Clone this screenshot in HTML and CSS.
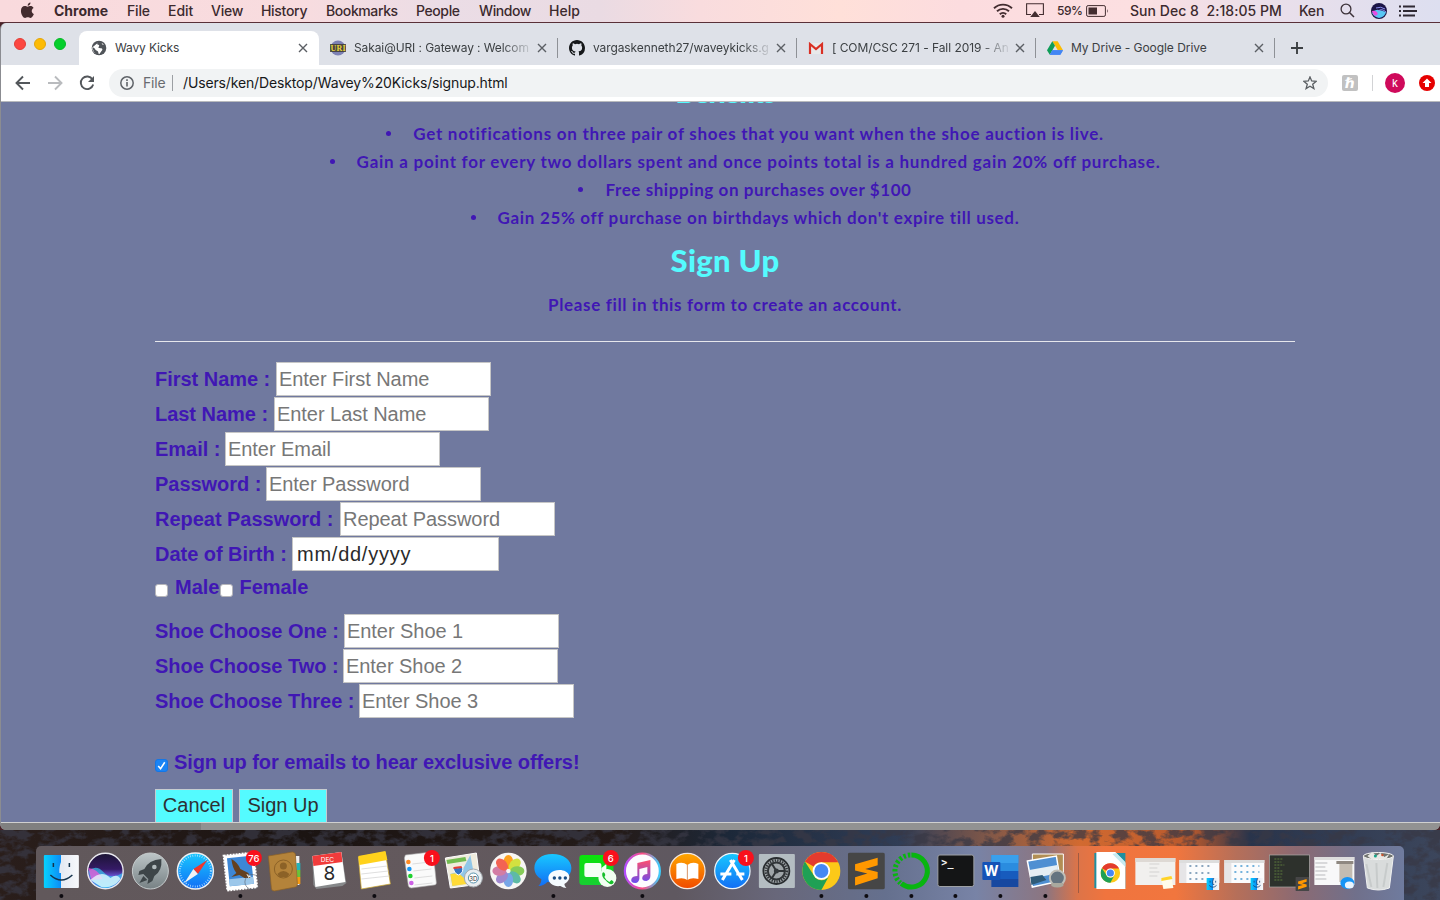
FILE: index.html
```html
<!DOCTYPE html>
<html lang="en">
<head>
<meta charset="utf-8">
<title>Wavy Kicks</title>
<link rel="stylesheet" href="styles.css">
</head>
<body>
<svg class="defs" width="0" height="0" aria-hidden="true">
  <defs>
    <linearGradient id="blue" x2="0" y2="1"><stop stop-color="#18c8ff"/><stop offset="1" stop-color="#126ef5"/></linearGradient>
    <linearGradient id="grey" x2="0" y2="1"><stop stop-color="#bdc6c8"/><stop offset="1" stop-color="#778184"/></linearGradient>
    <linearGradient id="orange" x2="0" y2="1"><stop stop-color="#ffa800"/><stop offset="1" stop-color="#f04a00"/></linearGradient>
    <linearGradient id="green" x2="0" y2="1"><stop stop-color="#0be30b"/><stop offset="1" stop-color="#17cf32"/></linearGradient>
    <linearGradient id="pink" x2="0" y2="1"><stop stop-color="#ff4d6d"/><stop offset="1" stop-color="#6a4df0"/></linearGradient>
    <linearGradient id="ring"><stop stop-color="#b04dff"/><stop offset=".5" stop-color="#ff4d82"/><stop offset="1" stop-color="#3ccfff"/></linearGradient>
    <linearGradient id="siri" x2="0" y2="1"><stop stop-color="#1b1433"/><stop offset=".45" stop-color="#351a66"/><stop offset=".65" stop-color="#6a55d8"/><stop offset="1" stop-color="#2fa6f2"/></linearGradient>
    <linearGradient id="finder"><stop stop-color="#07d2ff"/><stop offset=".5" stop-color="#0c8bf5"/><stop offset=".5" stop-color="#e5eaf3"/><stop offset="1" stop-color="#f7f8fb"/></linearGradient>
    <symbol id="chrome" viewBox="-20 -20 40 40">
      <circle r="19.5" fill="#fcc918"/>
      <path d="M-16.9-9.7A19.5 19.5 0 0 1 16.9-9.8L17-9H0A9 9 0 0 0-8-4.500z" fill="#e33b2e"/>
      <path d="M-16.9-9.7A19.5 19.5 0 0 0 0 19.5L8 4.800A9 9 0 0 1-8 4.200z" fill="#1fa055"/>
      <circle r="9" fill="#fff"/><circle r="7.200" fill="#4688f4"/>
    </symbol>
    <symbol id="minifinder" viewBox="0 0 14 13"><path d="M0 0h14v13H0z" fill="url(#finder)"/><path d="M3 8q4 4 8 0M4 3v2M10 3v2M8 0q-2 4-1 7h1.500" fill="none" stroke="#174a7c" stroke-width=".9"/></symbol>
    <symbol id="sublime" viewBox="-18 -18 36 36"><rect x="-18" y="-18" width="36" height="36" rx="2" fill="#464646"/><path d="M-11-6.500 11-13V-5.500L-1-2 11 1V7L-11 14V6L1 2.500-11-.5z" fill="#ff9800"/></symbol>
    <symbol id="close" viewBox="0 0 10 10"><path d="m1 1 8 8M9 1 1 9" stroke="#5b5f64" stroke-width="1.400"/></symbol>
  </defs>
</svg>

<div class="screen">
  <header class="menubar">
    <svg class="apple" viewBox="0 0 16 18"><path d="M11.200.5C9.500.6 8 2.200 8.200 4 9.900 4 11.300 2.300 11.200.5M8.100 5C7.300 5 6.300 4.300 5.100 4.300 2.900 4.300 1 6.200 1 9.500 1 13 3.500 17 5.400 17c1 0 1.600-.7 2.900-.7s1.700.7 2.900.7c1.600 0 3-2.600 3.600-4.200-2.900-1.200-3-5-.3-6.500C13.600 4.900 12.500 4.300 11.300 4.300 9.900 4.300 9 5 8.100 5z"/></svg>
    <nav class="menus">
      <b class="m-app">Chrome</b><span class="m-file">File</span><span class="m-edit">Edit</span><span class="m-view">View</span><span class="m-hist">History</span><span class="m-book">Bookmarks</span><span class="m-ppl">People</span><span class="m-win">Window</span><span>Help</span>
    </nav>
    <div class="status">
      <svg class="wifi" viewBox="0 0 20 15"><g fill="none" stroke="#432d30" stroke-width="1.900"><path d="M1 5.200a13 13 0 0 1 18 0M4 8.300a8.700 8.700 0 0 1 12 0M6.800 11.200a4.600 4.600 0 0 1 6.400 0"/></g><circle cx="10" cy="13.300" r="1.500" fill="#432d30"/></svg>
      <svg class="airplay" viewBox="0 0 18 15"><path d="M5 11.500H.6V.8h16.800v10.700H13" fill="none" stroke="#432d30" stroke-width="1.100"/><path d="m9 8 4.800 6H4.200z" fill="#432d30"/></svg>
      <span class="pct">59%</span>
      <svg class="battery" viewBox="0 0 23 12"><rect x=".6" y=".6" width="18.800" height="10.800" rx="1.500" fill="none" stroke="#432d30"/><path d="M2.500 2.500h8.500v7H2.500zM21 4q1.500 2 0 4z" fill="#432d30"/></svg>
      <span class="clock">Sun Dec 8&nbsp; 2:18:05 PM</span>
      <span class="user">Ken</span>
      <svg class="search" viewBox="0 0 15 15"><circle cx="6" cy="6" r="4.900" fill="none" stroke="#3c3239" stroke-width="1.300"/><path d="m9.500 9.500 4.500 4.500" stroke="#3c3239" stroke-width="1.500"/></svg>
      <svg class="siri" viewBox="0 0 16 16"><circle cx="8" cy="8" r="8" fill="#1b1547"/><path d="M1 10q3-4 7-3t7 2q-1 5-7 6-5-1-7-5" fill="#58c7f4"/><path d="M.8 8q5-1 6 3-2 3-4 1z" fill="#e64de1"/><path d="M7 8q4-3 8 1M5 5q5-2 9 1" fill="none" stroke="#8b8ff0"/></svg>
      <svg class="list" viewBox="0 0 18 12"><path d="M0 1.500h2M4 1.500h12M0 6h2M4 6h14M0 10.500h2M4 10.500h12" stroke="#2e2933" stroke-width="1.900"/></svg>
    </div>
  </header>

  <main class="window">
    <div class="tabstrip">
      <div class="lights"><i class="red"></i><i class="yellow"></i><i class="green"></i></div>
      <div class="tab active">
        <svg class="fav" viewBox="0 0 16 16"><circle cx="8" cy="8" r="7.300" fill="#505459"/><path d="M8.500 1.500c-1 1-3 1.200-2.500 2.500.8 1.200 2 .3 2.200 1.500S7 7 7.500 7.800s3.200 0 3.800 1.200c.5 1-.8 1.800-1.500 3L8.500 14c-1.500 0-1-1.500-1.500-2.500S4.500 10.500 4 9 2 7.500 1.800 7.500 2 12 5 13.500c-2.500-1-4-3.500-3.800-6M11 3c-.8.800.5 2 2 2" fill="#fff"/></svg>
        <span class="title t1">Wavy Kicks</span><svg class="x"><use href="#close"/></svg>
      </div>
      <div class="tab">
        <svg class="fav" viewBox="0 0 16 16"><circle cx="8" cy="8" r="7.500" fill="#7d81b4"/><path d="M0 4h16v8H0z" fill="#393525" opacity=".8"/><text x="8" y="11.400" text-anchor="middle" class="uri" textLength="15">URI</text></svg>
        <span class="title fade t2">Sakai@URI : Gateway : Welcom</span><svg class="x"><use href="#close"/></svg>
      </div>
      <div class="tab">
        <svg class="fav" viewBox="0 0 16 16"><path fill="#16181a" d="M8 0C3.580 0 0 3.580 0 8c0 3.540 2.290 6.530 5.470 7.590.4.070.55-.17.55-.38v-1.490c-2.010.37-2.530-.49-2.690-.94-.09-.23-.48-.94-.82-1.130-.28-.15-.68-.52-.01-.53.63-.01 1.080.58 1.230.82.72 1.210 1.870.87 2.330.66.07-.52.28-.87.51-1.070-1.780-.2-3.640-.89-3.640-3.950 0-.87.31-1.590.82-2.150-.08-.2-.36-1.020.08-2.120 0 0 .67-.21 2.200.82a7.600 7.600 0 0 1 4 0c1.530-1.040 2.200-.82 2.200-.82.44 1.100.16 1.920.08 2.120.51.56.82 1.270.82 2.150 0 3.070-1.870 3.750-3.650 3.950.29.25.54.73.54 1.480v2.200c0 .21.15.46.55.38A8 8 0 0 0 16 8c0-4.420-3.580-8-8-8z"/></svg>
        <span class="title fade t3">vargaskenneth27/waveykicks.g</span><svg class="x"><use href="#close"/></svg>
      </div>
      <div class="tab">
        <svg class="fav" viewBox="0 0 16 16"><path d="M2 3h12v11H2z" fill="#e8e9ea"/><path d="M2 14V4L8 9l6-5v10" fill="none" stroke="#d93025" stroke-width="2.200"/></svg>
        <span class="title fade t4">[ COM/CSC 271 - Fall 2019 - An</span><svg class="x"><use href="#close"/></svg>
      </div>
      <div class="tab">
        <svg class="fav" viewBox="0 0 16 16"><path d="M5.300 1.200h5.400L16 10.300h-5.200z" fill="#fbbc05"/><path d="M5.300 1.200 8 5.800 2.800 14.800 0 10.300z" fill="#0f9d58"/><path d="m5.400 10.300H16l-2.700 4.500H2.800z" fill="#4285f4"/><path d="M5.400 10.300H16l-2.700 4.500H2.800z" fill="#4285f4"/></svg>
        <span class="title t5">My Drive - Google Drive</span><svg class="x"><use href="#close"/></svg>
      </div>
      <svg class="plus" viewBox="0 0 12 12"><path d="M6 0v12M0 6h12" stroke="#3c4043" stroke-width="1.900"/></svg>
    </div>

    <div class="toolbar">
      <svg class="nav" viewBox="0 0 16 16"><path d="M15 8H2M8 1.500 1.500 8 8 14.500" fill="none" stroke="#53575b" stroke-width="1.900"/></svg>
      <svg class="nav" viewBox="0 0 16 16"><path d="M1 8h13M8 1.500 14.500 8 8 14.500" fill="none" stroke="#b9bbbe" stroke-width="1.900"/></svg>
      <svg class="nav" viewBox="0 0 16 16"><path d="M13.500 4.500A6.300 6.300 0 1 0 14.200 9.500" fill="none" stroke="#53575b" stroke-width="1.900"/><path d="M15 1v6H9z" fill="#53575b"/></svg>
      <div class="omnibox">
        <svg class="info" viewBox="0 0 14 14"><circle cx="7" cy="7" r="6.200" fill="none" stroke="#5f6368" stroke-width="1.500"/><path d="M7 6v4.500M7 3.300v1.600" stroke="#5f6368" stroke-width="1.600"/></svg>
        <span class="scheme">File</span><span class="url">/Users/ken/Desktop/Wavey%20Kicks/signup.html</span>
        <svg class="star" viewBox="0 0 14 14"><path d="m7 .9 1.700 4.100 4.500.3-3.500 2.900 1.200 4.400L7 10.200l-3.900 2.400 1.200-4.400L.8 5.300l4.500-.3z" fill="none" stroke="#5b5f63" stroke-width="1.300"/></svg>
      </div>
      <span class="honey">ℏ</span><i class="vsep"></i><span class="avatar">k</span>
      <svg class="update" viewBox="0 0 16 16"><circle cx="8" cy="8" r="8" fill="#e60000"/><path d="M8 3.500 12.500 8H10v4H6V8H3.500z" fill="#fff"/></svg>
    </div>

    <section class="page">
      <div class="container">
        <h2 class="benefits">Benefits</h2>
        <ul class="perks">
          <li class="l1">Get notifications on three pair of shoes that you want when the shoe auction is live.</li>
          <li class="l2">Gain a point for every two dollars spent and once points total is a hundred gain 20% off purchase.</li>
          <li class="l3">Free shipping on purchases over $100</li>
          <li class="l4">Gain 25% off purchase on birthdays which don't expire till used.</li>
        </ul>
        <h2 class="signup">Sign Up</h2>
        <p class="intro">Please fill in this form to create an account.</p>
        <hr>
        <form>
          <div class="row"><label class="w1">First Name :</label><input type="text" placeholder="Enter First Name"></div>
          <div class="row"><label class="w2">Last Name :</label><input type="text" placeholder="Enter Last Name"></div>
          <div class="row"><label class="w3">Email :</label><input type="text" placeholder="Enter Email"></div>
          <div class="row"><label class="w4">Password :</label><input type="password" placeholder="Enter Password"></div>
          <div class="row"><label class="w5">Repeat Password :</label><input type="password" placeholder="Repeat Password"></div>
          <div class="row"><label class="w6">Date of Birth :</label><input class="date" type="text" value="mm/dd/yyyy"></div>
          <div class="checks gender"><i class="box"></i><label class="male">Male</label><i class="box"></i><label>Female</label></div>
          <div class="row"><label class="w7">Shoe Choose One :</label><input type="text" placeholder="Enter Shoe 1"></div>
          <div class="row"><label class="w8">Shoe Choose Two :</label><input type="text" placeholder="Enter Shoe 2"></div>
          <div class="row"><label class="w9">Shoe Choose Three :</label><input type="text" placeholder="Enter Shoe 3"></div>
          <div class="checks offers"><i class="box on"><svg viewBox="0 0 14 14"><path d="m3.500 7.500 2.500 3 4.500-7" fill="none" stroke="#fff" stroke-width="1.700"/></svg></i><label>Sign up for emails to hear exclusive offers!</label></div>
          <div class="buttons"><button type="button" class="cancel">Cancel</button><button type="button" class="submit">Sign Up</button></div>
        </form>
      </div>
    </section>
    <div class="shelf"></div>
  </main>

  <footer class="desktop">
    <svg class="rocks" width="1440" height="71" preserveAspectRatio="none">
      <filter id="rough" x="0" y="0" width="100%" height="100%"><feTurbulence type="fractalNoise" baseFrequency=".07 .11" numOctaves="4" seed="8"/><feColorMatrix values="0 0 0 0 .04  0 0 0 0 .04  0 0 0 0 .06  4.500 0 0 0 -1.900"/></filter>
      <rect width="1440" height="71" filter="url(#rough)"/>
    </svg>
    <div class="dock">
      <div class="apps">
        <svg viewBox="-22 -25 44 54"><rect x="-17.500" y="-16" width="35" height="33" rx="1" fill="url(#finder)"/><path d="M2.500-16Q-3-5-2 2H2.500" fill="#e5eaf3"/><path d="M-11 4Q0 14 11 4M-8-8v4M8-8v4" fill="none" stroke="#15334c" stroke-width="1.500"/><circle class="dot" cy="25" r="2"/></svg>
        <svg viewBox="-22 -25 44 54"><circle r="17.800" fill="url(#siri)" stroke="#e8e8ee" stroke-width="1.400"/><path d="M-17 0Q-9-7-2 1T17 2Q16 13 0 17-15 13-17 0" fill="#39c5ef" opacity=".7"/><path d="M-17-3Q-7-2-3 8L-14 9" fill="#ef58d5" opacity=".75"/><path d="M-15 9Q-4-2 5 7 12 2 15 8 8 18-4 16z" fill="#e9ffff" opacity=".75"/></svg>
        <svg viewBox="-22 -25 44 54"><circle r="18" fill="url(#grey)" stroke="#c5cbcc"/><path d="M11-12Q-2-11-6-2L-11 0-12 4-7 3-2 8-3 13 2 10 4 5Q12 0 11-12M-7 5-11 12-3 9" fill="#3d4548"/><circle cx="4" cy="-4" r="2.300" fill="#b1babc"/></svg>
        <svg viewBox="-22 -25 44 54"><circle r="18" fill="url(#blue)" stroke="#eef1f4" stroke-width="1.500"/><circle r="15.500" fill="none" stroke="#bfe8ff" stroke-dasharray=".7 1.700" stroke-width="2"/><path d="M12-11 2.500 3-2-2z" fill="#f0362c"/><path d="M-11 12 2.500 3-2-2z" fill="#f1f3f5"/></svg>
        <svg viewBox="-22 -25 44 54"><g transform="rotate(-6)"><rect x="-15" y="-17" width="30" height="35" fill="#fff" stroke="#fff" stroke-width="2" stroke-dasharray="2 1"/><path d="M-12-14h24v28h-24z" fill="#3d87d6"/><path d="M-12 7h24v7h-24z" fill="#9cc7ea"/></g><path d="M-9-12Q-3-9 0-2L8 2 10 7 4 7-1 4-9 6-4 2Q-8-3-9-12" fill="#64401f"/><path d="m6 3 5 2-3 2z" fill="#f4ede0"/><circle cx="12" cy="11" r="7.500" fill="none" stroke="#56616e" opacity=".6"/><circle cx="13.500" cy="-13" r="8" fill="#f9101c"/><text x="13.500" y="-9.300" class="badge">76</text><circle class="dot" cy="25" r="2"/></svg>
        <svg viewBox="-22 -25 44 54"><path d="M11-15h4v29h-4z" fill="#eee"/><path d="M12-8h4v7h-4z" fill="#24b3bb"/><path d="M12-1h4v7h-4z" fill="#6ac239"/><path d="M12 6h4v7h-4z" fill="#f59b14"/><path d="m-16-15 24-4q2 0 3 2l2 30q0 3-2 3l-21 4q-3 0-3-3z" fill="#b4833a" stroke="#8c6227" stroke-width=".7"/><circle cx="-1" cy="-2" r="9" fill="none" stroke="#8c6227"/><circle cx="-1" cy="-5" r="3.500" fill="#8c6227"/><path d="M-7 3Q-1-3 5 3L3 6H-5z" fill="#8c6227"/></svg>
        <svg viewBox="-22 -25 44 54"><path d="m-17-15 29-4 5 31-4 3-26 3-3-4z" fill="#87898b"/><path d="m-17-15 29-4 4 30-30 5z" fill="#fff"/><path d="m-17-15 29-4 1 10-29 4z" fill="#f13b3b"/><text x="-2" y="-9.500" class="cal-m">DEC</text><text x="0" y="9" class="cal-d">8</text></svg>
        <svg viewBox="-22 -25 44 54"><path d="m-16-14 27-5 5 32-29 5z" fill="#fff" stroke="#cfa92e" stroke-width=".7"/><path d="m-16-15 27-5 2 9-28 5z" fill="#ffd21c"/><path d="m-13-2 26-3m-26 8 27-3m-27 8 28-3" stroke="#d7d7d7" stroke-width=".8"/><circle class="dot" cy="25" r="2"/></svg>
        <svg viewBox="-22 -25 44 54"><path d="m-13-16 26-3q2 0 2 2l3 29q0 2-2 2l-23 3q-2 0-3-2l-4-28z" fill="#fafafa" stroke="#aaa" stroke-width=".6"/><path d="m-6-7 18-2M-5 0l18-2M-4 7l18-2M-4 14l18-2" stroke="#d5d5d5" stroke-width=".8"/><circle cx="-10" cy="-9" r="2.300" fill="#ff8a22"/><circle cx="-9" cy="-2" r="2.300" fill="#1697f4"/><circle cx="-8" cy="5" r="2.300" fill="#1fd02f"/><circle cx="-7" cy="12" r="2.300" fill="#cd61e5"/><circle cx="13.500" cy="-13" r="8" fill="#f9101c"/><text x="13.500" y="-9.300" class="badge">1</text></svg>
        <svg viewBox="-22 -25 44 54"><path d="m-18-13 31-5 4 31-30 4z" fill="#f0ecdd" stroke="#fff"/><path d="m-17-11 19-3 1 4-19 3z" fill="#72bc51"/><path d="m-13 3 12-4 8-15 5 27-23 4z" fill="#91c7e8"/><path d="m-13 3 8-1 9 8-1 3-14 2z" fill="#ffda37"/><path d="M-10-4q5 2 9-1 2 7-4 9-5-2-5-8" fill="#3474c4" stroke="#fff"/><path d="m-10-4 8-1 1 2-9 1z" fill="#e43d35"/><circle cx="10" cy="7" r="9" fill="#e9edf0" stroke="#a3abb0"/><circle cx="10" cy="7" r="5" fill="#fff" stroke="#5893ac"/><text x="10" y="9.500" class="map3d">3D</text></svg>
        <svg viewBox="-22 -25 44 54"><circle r="18.300" fill="#f7f6f4"/><g opacity=".88"><ellipse cy="-9" rx="4.800" ry="7" fill="#ff9500"/><ellipse cy="-9" rx="4.800" ry="7" fill="#cfdf28" transform="rotate(45)"/><ellipse cy="-9" rx="4.800" ry="7" fill="#77c643" transform="rotate(90)"/><ellipse cy="-9" rx="4.800" ry="7" fill="#49b29b" transform="rotate(135)"/><ellipse cy="-9" rx="4.800" ry="7" fill="#669ce6" transform="rotate(180)"/><ellipse cy="-9" rx="4.800" ry="7" fill="#9578c9" transform="rotate(225)"/><ellipse cy="-9" rx="4.800" ry="7" fill="#cf6c9a" transform="rotate(270)"/><ellipse cy="-9" rx="4.800" ry="7" fill="#f34f3d" transform="rotate(315)"/></g></svg>
        <svg viewBox="-22 -25 44 54"><path d="M-1-17c-11 0-18 6-18 14 0 5 3 9 7 11 0 3-1 5-3 7 4 0 7-2 9-4 15 2 24-5 24-14 0-8-8-14-19-14" fill="url(#blue)"/><path d="M6-1c-7 0-11 4-11 8 0 5 5 9 12 8q3 2 6 2-2-2-2-4c9-5 5-14-5-14" fill="#f5fbff"/><g fill="#174c83"><circle cx="1" cy="7" r="1.700"/><circle cx="6.500" cy="7" r="1.700"/><circle cx="12" cy="7" r="1.700"/></g><circle class="dot" cy="25" r="2"/></svg>
        <svg viewBox="-22 -25 44 54"><rect x="-18" y="-16" width="34" height="30" rx="3" fill="url(#green)"/><rect x="-13" y="-8" width="17" height="14" rx="2" fill="#f4fff5"/><path d="M4-3 9-7V5L4 2" fill="#f4fff5"/><circle cx="10" cy="7" r="9" fill="#f2fff2"/><path d="M5 2q2-2 3 2L7 6q2 4 5 5l2-2q4 2 1 4-3 1-7-4Q4 6 5 2" fill="#17bf2b"/><circle cx="13.500" cy="-13" r="8" fill="#f9101c"/><text x="13.500" y="-9.300" class="badge">6</text></svg>
        <svg viewBox="-22 -25 44 54"><circle r="17.500" fill="#fdfcff" stroke="url(#ring)" stroke-width="2.200"/><path d="M-5-8 8-11V5q0 4-4 5-5 0-4-4 1-3 5-3v-7L-3-2V8q-1 4-4 4-5 0-4-4 1-3 6-3z" fill="url(#pink)"/><circle class="dot" cy="25" r="2"/></svg>
        <svg viewBox="-22 -25 44 54"><circle r="17.700" fill="url(#orange)" stroke="#f6e9df" stroke-width="1.200"/><path d="M0-6Q-5-10-11-7V8Q-4 6 0 9 4 6 11 8V-7Q5-10 0-6" fill="#fff"/><path d="M0-6V9" stroke="#ce7a42" stroke-width=".8"/></svg>
        <svg viewBox="-22 -25 44 54"><circle r="17.700" fill="url(#blue)" stroke="#eef6fb" stroke-width="1.200"/><path d="M2-11-10 9M-2-11 10 9M-12 3H-1M4 3h8" stroke="#fff" stroke-width="3"/><circle cx="13.500" cy="-13" r="8" fill="#f9101c"/><text x="13.500" y="-9.300" class="badge">1</text></svg>
        <svg viewBox="-22 -25 44 54"><rect x="-17.500" y="-17" width="36" height="34" rx="1" fill="#b4bdc2"/><circle r="13" fill="#9fa5a8" stroke="#292d30" stroke-width="1.800"/><circle r="10.500" fill="none" stroke="#303437" stroke-width="2.500" stroke-dasharray="1.300 1.200"/><circle r="8.500" fill="none" stroke="#303437" stroke-width="2"/><path d="M0 0-5-8M0 0h9M0 0-5 8" stroke="#303437" stroke-width="2"/><circle r="2.500" fill="#33383b"/></svg>
        <svg viewBox="-22 -25 44 54"><use href="#chrome" x="-19.500" y="-19.500" width="39" height="39"/><circle class="dot" cy="25" r="2"/></svg>
        <svg viewBox="-22 -25 44 54"><use href="#sublime" x="-18.500" y="-18.500" width="37" height="37"/><circle class="dot" cy="25" r="2"/></svg>
        <svg viewBox="-22 -25 44 54"><path d="M0-16A16 16 0 1 1-10 12.500" fill="none" stroke="#08b510" stroke-width="5"/><path d="M-1-16A16 16 0 0 0-11 12" fill="none" stroke="#08b510" stroke-width="5" stroke-dasharray="2.500 2"/><circle class="dot" cy="25" r="2"/></svg>
        <svg viewBox="-22 -25 44 54"><rect x="-17.500" y="-16" width="36" height="31.500" rx="2" fill="#141516" stroke="#9ea1a5"/><text x="-14" y="-5" class="term">&gt;_</text><circle class="dot" cy="25" r="2"/></svg>
        <svg viewBox="-22 -25 44 54"><path d="M-9-16h27V0H-9z" fill="#2a8cdf"/><path d="M-9-16h27v8H-9z" fill="#3aa0ec"/><path d="M-9 0h27v8H-9z" fill="#175bbd"/><path d="M-9 8h27v8H-9z" fill="#1748a0"/><rect x="-18" y="-9" width="18" height="18" rx="1" fill="#1553b7"/><text x="-9" y="5" class="word">W</text><circle class="dot" cy="25" r="2"/></svg>
        <svg viewBox="-22 -25 44 54"><path d="M-13-17h31V12h-31z" fill="#b28e55" stroke="#fff"/><path d="m-18-10 29-5 4 25-28 6z" fill="#4f8fd2" stroke="#fff" stroke-width="1.500"/><path d="m-16-1 28-5 1 8-28 6z" fill="#e5eef4"/><path d="m-15 6 12-2 4 5-15 5z" fill="#2f5b78"/><circle cx="12" cy="7" r="7.500" fill="#657480" stroke="#c0bfb8" stroke-width="2"/><path d="M6 12h12v3q-6 3-12 0z" fill="#aaa99e"/><circle class="dot" cy="25" r="2"/></svg>
      </div>
      <i class="dock-sep"></i>
      <div class="apps">
        <svg viewBox="-22 -25 44 54"><path d="M-16-18h31V17h-31z" fill="#1f8fa0"/><path d="M-14-19H5L15-8V18h-29z" fill="#fff"/><path d="M2-17 15-4V-9L6-18z" fill="#c7eaf0"/><use href="#chrome" x="-10" y="-8" width="20" height="20"/></svg>
        <svg viewBox="-22 -25 44 54"><rect x="-20" y="-13" width="40" height="27" fill="#f1f0ee"/><path d="M-20-13h40v4h-40z" fill="#ded9d4"/><path d="M-6-7h10M-6-3h8M-6 1h10M-6 5h8" stroke="#d3d2d1"/><path d="m6 8 10-2 2 11-10 1z" fill="#fffceb"/><path d="m6 7 10-2 1 3-11 2z" fill="#ffd328"/></svg>
        <svg viewBox="-22 -25 44 54"><rect x="-20" y="-11" width="40" height="23" fill="#fbfbfc"/><path d="M-20-11h40v3h-40z" fill="#ddd"/><path d="M-20-8h7v20h-7z" fill="#e6e5e7"/><path d="M-10-5h23M-10 2h23M-10 8h16" stroke="#8aa6bf" stroke-width="2" stroke-dasharray="2 4"/><use href="#minifinder" x="7" y="7" width="13" height="12"/></svg>
        <svg viewBox="-22 -25 44 54"><rect x="-20" y="-11" width="40" height="23" fill="#fbfbfc"/><path d="M-20-11h40v3h-40z" fill="#ddd"/><path d="M-20-8h7v20h-7z" fill="#e6e5e7"/><path d="M-10-5h25M-10 1h25M-10 8h16" stroke="#74b2dc" stroke-width="2" stroke-dasharray="2 4"/><use href="#minifinder" x="6" y="7" width="13" height="12"/></svg>
        <svg viewBox="-22 -25 44 54"><rect x="-20" y="-16" width="40" height="32" fill="#2d312c" stroke="#a9aaa7" stroke-width=".7"/><path d="M-15-12h9m-9 3h7m-7 3h10m-10 3h6m-6 3h9m-9 3h8m-8 3h7m-7 3h9" stroke="#5d7a3d" stroke-dasharray="2 1"/><use href="#sublime" x="6" y="6" width="14" height="14"/></svg>
        <svg viewBox="-22 -25 44 54"><rect x="-20" y="-14" width="40" height="28" fill="#f8f8f9"/><path d="M-20-14h40v3h-40z" fill="#ddd"/><path d="M-19-8h12m-12 4h10m-10 4h12m-12 4h10m-10 4h11" stroke="#b9b9bd"/><path d="M2-10h17v3H2z" fill="#8f8881"/><path d="M5-7h13V11H5z" fill="#c4bcb2"/><ellipse cx="13" cy="12" rx="7" ry="6" fill="#1694f5"/><ellipse cx="15" cy="14" rx="4.500" ry="3.500" fill="#e9f5ff"/></svg>
        <svg viewBox="-22 -25 44 54"><path d="M-15-15h30L11 17Q0 21-11 17z" fill="#d9dcdc" stroke="#f0f1f1"/><path d="M-12-7-7 16M-2-8l1 25M9-8 5 16" stroke="#b7bbbb" stroke-width="2" opacity=".5"/><ellipse cy="-15" rx="15" ry="3.500" fill="#70736f" stroke="#f7f7f7"/><path d="m-11-15 5-4 4 4 4-3 4 4 5-3-3 5h-15z" fill="#e9e8e4"/><circle cx="-3" cy="-15" r="1.500" fill="#17a489"/><circle cx="4" cy="-16" r="1.200" fill="#c9532d"/></svg>
      </div>
    </div>
  </footer>
</div>
</body>
</html>
```

FILE: styles.css
```css
* { box-sizing: border-box; }
body { margin: 0; background: #4a2228; font-family: Inter, sans-serif; }
svg { display: block; flex: none; }
.defs { position: absolute; }
.screen { width: 1440px; height: 900px; overflow: hidden; display: flex; flex-direction: column; }

/* system menu bar */
.menubar { height: 23px; flex: none; display: flex; align-items: center; padding: 0 23px 1px 20px; border-bottom: 1px solid #593038; color: #3c2a2e; font-size: 14px; font-weight: 500; white-space: nowrap;
  background: linear-gradient(90deg, #f9dadd 0, #f8dcdf 300px, #ebdde6 440px, #eadbe3 600px, #f9dcde 700px, #ffe0d9 840px, #fcdcdf 960px, #fcdfe1 1130px, #ebdfea 1260px, #dddff0 1440px); }
.apple { width: 15px; height: 17px; fill: #432b2e; margin-right: 19px; }
.menus { display: flex; }
.menus > * { flex: none; }
.m-app { width: 73px; font-weight: 700; letter-spacing: 0; }
.m-file { width: 41px; letter-spacing: -.2px; }
.m-edit { width: 43px; }
.m-view { width: 50px; letter-spacing: -.2px; }
.m-hist { width: 65px; letter-spacing: -.3px; }
.m-book { width: 90px; letter-spacing: -.4px; }
.m-ppl { width: 63px; letter-spacing: -.4px; }
.m-win { width: 70px; letter-spacing: -.4px; }
.status { margin-left: auto; display: flex; align-items: center; }
.wifi { width: 20px; height: 15px; margin: -1px 13px 0 0; }
.airplay { width: 18px; height: 15px; margin-right: 13px; }
.pct { width: 29px; font-size: 12px; letter-spacing: -.5px; }
.battery { width: 23px; height: 12px; margin-right: 21px; }
.clock { width: 169px; letter-spacing: .04px; }
.user { width: 41px; letter-spacing: -.2px; }
.search { width: 15px; height: 15px; margin-right: 16px; }
.siri { width: 16px; height: 16px; margin-right: 12px; }
.list { width: 18px; height: 12px; }

/* browser window */
.window { height: 807px; flex: none; display: flex; flex-direction: column; border-left: 1px solid #8b8c91; border-radius: 6px 0 6px 6px; overflow: hidden; background: #8f8f8f; }
.tabstrip { height: 42px; flex: none; display: flex; align-items: flex-end; background: #dee1e8; }
.lights { height: 34px; width: 78px; display: flex; gap: 8px; padding: 7px 0 0 13px; }
.lights i { width: 12px; height: 12px; border-radius: 50%; }
.red { background: #fc4741; border: 1px solid #e33e37; }
.yellow { background: #fdbb05; border: 1px solid #e3a60a; }
.green { background: #05cf2c; border: 1px solid #06b927; }
.tab { width: 239px; height: 34px; flex: none; display: flex; align-items: center; padding: 0 0 0 11px; }
.tab:not(.active) { background: linear-gradient(#8e9196, #8e9196) 238px 7px / 1px 20px no-repeat; }
.tab.active { width: 240px; background: #fff; border-radius: 8px 8px 0 0; padding-left: 12px; }
.fav { width: 16px; height: 16px; margin-right: 8px; }
.uri { font: 700 8px "Liberation Serif", serif; fill: #e9d43b; }
.title { width: 176px; margin-right: 7px; padding-bottom: 1px; font-size: 12px; color: #3c4043; overflow: hidden; white-space: nowrap; }
.active .title { width: 182px; margin-right: 1px; }
.fade { -webkit-mask-image: linear-gradient(90deg, #000 148px, transparent 180px); mask-image: linear-gradient(90deg, #000 148px, transparent 180px); }
.x { width: 10px; height: 10px; }
.t1 { letter-spacing: -.15px; }
.t2 { letter-spacing: -.1px; }
.t3 { letter-spacing: -.1px; }
.t4 { letter-spacing: -.05px; }
.t5 { letter-spacing: -.05px; }
.plus { width: 12px; height: 12px; margin: 0 0 11px 16px; }
.toolbar { height: 37px; flex: none; background: #fff; border-bottom: 1px solid #b8babd; display: flex; align-items: center; padding-left: 14px; }
.nav { width: 16px; height: 16px; margin-right: 16px; }
.omnibox { width: 1219px; height: 28px; margin-left: -2px; border-radius: 14px; background: #f1f3f4; display: flex; align-items: center; padding: 0 11px; font-size: 14px; color: #16181a; }
.info { width: 14px; height: 14px; margin-right: 9px; }
.scheme { width: 30px; height: 16px; line-height: 16px; color: #686b70; border-right: 1px solid #9c9fa3; margin-right: 10px; letter-spacing: -.2px; }
.url { letter-spacing: -.14px; padding-bottom: 2px; }
.star { width: 14px; height: 14px; margin-left: auto; }
.honey { width: 16px; height: 16px; margin-left: 14px; border-radius: 2px; background: #c1c1c1; color: #fff; font: 700 14px/16px "DejaVu Sans", sans-serif; text-align: center; }
.vsep { width: 1px; height: 16px; background: #d2d3d5; margin: 0 12px 0 14px; }
.avatar { width: 20px; height: 20px; border-radius: 50%; background: #cf0a5b; color: #fff; font-size: 11px; line-height: 20px; text-align: center; margin-right: 14px; }
.update { width: 16px; height: 16px; }

/* sign-up page */
.page { height: 720px; flex: none; overflow: hidden; background: #70799f; }
.container { width: 1140px; margin: 0 0 0 154px; color: #4017b4; }
.perks, .intro { font: 700 17px/28px Lato, sans-serif; white-space: nowrap; text-align: center; font-variant-ligatures: none; }
.benefits, .signup { margin: 0; font: 900 31px/34px Lato, sans-serif; color: #54fbff; text-align: center; }
.benefits { margin-top: -28px; height: 34px; letter-spacing: -2px; font-variant-ligatures: none; }
.perks { margin: 12px 0 0; padding: 0 0 0 40px; list-style: none; }
.perks li::before { content: ""; display: inline-block; width: 5px; height: 5px; margin-right: 22px; border-radius: 50%; background: #4017b4; vertical-align: 4px; }
.l1 { letter-spacing: .74px; }
.l2 { letter-spacing: .74px; }
.l3 { letter-spacing: .58px; }
.l4 { letter-spacing: .67px; }
.signup { margin-top: 11px; letter-spacing: .3px; }
.intro { margin: 14px 0 0; letter-spacing: .65px; }
hr { height: 1px; border: 0; background: #e6e7ec; margin: 22px 0 20px; }
form { margin: 0; font: 20px "Liberation Sans", Arial, sans-serif; }
.row { height: 35px; display: flex; align-items: flex-start; line-height: 34px; }
label { font-weight: 700; white-space: nowrap; }
.row label { flex: none; letter-spacing: -.03px; }
.w1 { width: 121px; } .w2 { width: 119px; } .w3 { width: 70px; } .w4 { width: 111px; } .w5 { width: 185px; }
.w6 { width: 137px; } .w7 { width: 189px; } .w8 { width: 188px; } .w9 { width: 204px; }
input { width: 215px; height: 34px; border: 1px solid #c6c6c6; border-radius: 0; background: #fff; padding: 0 2px; font: inherit; color: #2b2b2b; outline: 0; }
input::placeholder { color: #777; opacity: 1; letter-spacing: -.05px; }
.date { width: 207px; padding-left: 4px; letter-spacing: .75px; }
.checks { display: flex; align-items: center; line-height: 28px; height: 28px; }
.box { width: 13px; height: 13px; margin: 6px 6px 0 1px; border: 1px solid #b5b5ba; border-radius: 3px; background: #fff; }
.box:first-child { margin-left: 0; }
.box.on { background: #1b84f5; border-color: #1476e6; }
.box svg { width: 13px; height: 13px; margin: -1px; }
.gender { margin: 1px 0 13px; }
.male { margin-left: 1px; }
.offers { margin: 29px 0 13px; letter-spacing: -.08px; }
.buttons { display: flex; gap: 6px; }
button { height: 34px; border: 1px solid #c5ccd0; border-radius: 0; background: #54fbff; padding: 0 0 2px; font: inherit; color: #2e3133; }
.cancel { width: 78px; }
.submit { width: 88px; }
.shelf { height: 8px; border-top: 1px solid #d0d0d0; background: linear-gradient(90deg, #808080 200px, #929292 200px); }

/* wallpaper and dock */
.desktop { position: relative; height: 70px; flex: none; padding: 16px 36px 0; display: flex;
  background: linear-gradient(90deg, #2a1e1b 0, #1b1412 300px, #241b19 620px, #1c2839 730px, #303d56 900px, #825848 990px, #d26a30 1080px, #b8592d 1190px, #29344b 1250px, #3c465c 1440px); }
.rocks { position: absolute; left: 0; top: 0; opacity: .75; }
.dock { position: relative; width: 1368px; height: 54px; border-radius: 5px 5px 0 0; padding-left: 2.600px; display: flex;
  background: linear-gradient(90deg, #61585b 0, #63595d 400px, #5f5860 640px, #68677a 740px, #65708e 850px, #7883a6 940px, #8c7580 1010px, #dd7448 1042px, #f0743e 1070px, #f1763e 1140px, #b66f59 1200px, #8c6a72 1260px, #70708b 1320px, #6f7b9e 1368px); }
.apps { display: flex; }
.apps svg { width: 44.740px; height: 54px; overflow: visible; }
.dock-sep { width: 1px; height: 40px; margin: 7px 9px 0 10.500px; background: #a05b43; flex: none; }
.dot { fill: #0d0b10; }
.badge { font: 500 9.500px Inter, sans-serif; fill: #fff; text-anchor: middle; }
.cal-m { font: 6.500px Inter, sans-serif; fill: #fff; text-anchor: middle; }
.cal-d { font: 19px Inter, sans-serif; fill: #29292b; text-anchor: middle; }
.map3d { font: 6px Inter, sans-serif; fill: #333; text-anchor: middle; }
.term { font: 700 10px "DejaVu Sans Mono", monospace; fill: #f2f2f2; }
.word { font: 700 14px Inter, sans-serif; fill: #fff; text-anchor: middle; }
```
